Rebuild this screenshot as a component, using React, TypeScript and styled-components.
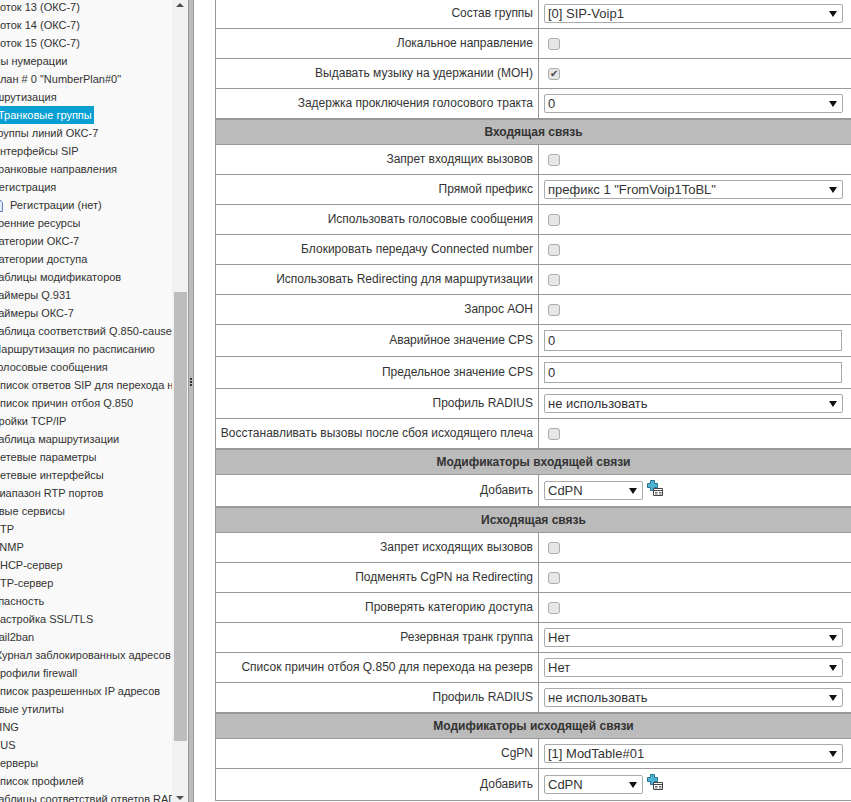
import React from "react";
import styled, { createGlobalStyle } from "styled-components";

const GlobalStyle = createGlobalStyle`
  html, body {
    margin: 0;
    padding: 0;
    height: 100%;
    overflow: hidden;
    background: #fff;
  }
  body {
    font-family: "Liberation Sans", Arial, sans-serif;
    font-size: 12px;
    color: #333;
  }
`;

type TreeItem = { text: string; level: number; selected?: boolean; doc?: boolean };

const tree: TreeItem[] = [
  { text: "Поток 13 (ОКС-7)", level: 1 },
  { text: "Поток 14 (ОКС-7)", level: 1 },
  { text: "Поток 15 (ОКС-7)", level: 1 },
  { text: "Планы нумерации", level: 0 },
  { text: 'План # 0 "NumberPlan#0"', level: 1 },
  { text: "Маршрутизация", level: 0 },
  { text: "Транковые группы", level: 1, selected: true },
  { text: "Группы линий ОКС-7", level: 1 },
  { text: "Интерфейсы SIP", level: 1 },
  { text: "Транковые направления", level: 1 },
  { text: "Регистрация", level: 1 },
  { text: "Регистрации (нет)", level: 2, doc: true },
  { text: "Внутренние ресурсы", level: 0 },
  { text: "Категории ОКС-7", level: 1 },
  { text: "Категории доступа", level: 1 },
  { text: "Таблицы модификаторов", level: 1 },
  { text: "Таймеры Q.931", level: 1 },
  { text: "Таймеры ОКС-7", level: 1 },
  { text: "Таблица соответствий Q.850-cause", level: 1 },
  { text: "Маршрутизация по расписанию", level: 1 },
  { text: "Голосовые сообщения", level: 1 },
  { text: "Список ответов SIP для перехода на резерв", level: 1 },
  { text: "Список причин отбоя Q.850", level: 1 },
  { text: "Настройки TCP/IP", level: 0 },
  { text: "Таблица маршрутизации", level: 1 },
  { text: "Сетевые параметры", level: 1 },
  { text: "Сетевые интерфейсы", level: 1 },
  { text: "Диапазон RTP портов", level: 1 },
  { text: "Сетевые сервисы", level: 0 },
  { text: "NTP", level: 1 },
  { text: "SNMP", level: 1 },
  { text: "DHCP-сервер", level: 1 },
  { text: "NTP-сервер", level: 1 },
  { text: "Безопасность", level: 0 },
  { text: "Настройка SSL/TLS", level: 1 },
  { text: "Fail2ban", level: 1 },
  { text: "Журнал заблокированных адресов", level: 1 },
  { text: "Профили firewall", level: 1 },
  { text: "Список разрешенных IP адресов", level: 1 },
  { text: "Сетевые утилиты", level: 0 },
  { text: "PING", level: 1 },
  { text: "RADIUS", level: 0 },
  { text: "Серверы", level: 1 },
  { text: "Список профилей", level: 1 },
  { text: "Таблицы соответствий ответов RADIUS", level: 1 },
];

type FormRow =
  | { kind: "select"; label: string; value: string; tall?: boolean }
  | { kind: "check"; label: string; checked?: boolean }
  | { kind: "input"; label: string; value: string }
  | { kind: "add"; label: string; value: string }
  | { kind: "header"; label: string };

const rows: FormRow[] = [
  { kind: "select", label: "Состав группы", value: "[0] SIP-Voip1" },
  { kind: "check", label: "Локальное направление" },
  { kind: "check", label: "Выдавать музыку на удержании (MOH)", checked: true },
  { kind: "select", label: "Задержка проключения голосового тракта", value: "0" },
  { kind: "header", label: "Входящая связь" },
  { kind: "check", label: "Запрет входящих вызовов" },
  { kind: "select", label: "Прямой префикс", value: 'префикс 1 "FromVoip1ToBL"' },
  { kind: "check", label: "Использовать голосовые сообщения" },
  { kind: "check", label: "Блокировать передачу Connected number" },
  { kind: "check", label: "Использовать Redirecting для маршрутизации" },
  { kind: "check", label: "Запрос АОН" },
  { kind: "input", label: "Аварийное значение CPS", value: "0" },
  { kind: "input", label: "Предельное значение CPS", value: "0" },
  { kind: "select", label: "Профиль RADIUS", value: "не использовать" },
  { kind: "check", label: "Восстанавливать вызовы после сбоя исходящего плеча" },
  { kind: "header", label: "Модификаторы входящей связи" },
  { kind: "add", label: "Добавить", value: "CdPN" },
  { kind: "header", label: "Исходящая связь" },
  { kind: "check", label: "Запрет исходящих вызовов" },
  { kind: "check", label: "Подменять CgPN на Redirecting" },
  { kind: "check", label: "Проверять категорию доступа" },
  { kind: "select", label: "Резервная транк группа", value: "Нет" },
  { kind: "select", label: "Список причин отбоя Q.850 для перехода на резерв", value: "Нет" },
  { kind: "select", label: "Профиль RADIUS", value: "не использовать" },
  { kind: "header", label: "Модификаторы исходящей связи" },
  { kind: "select", label: "CgPN", value: "[1] ModTable#01" },
  { kind: "add", label: "Добавить", value: "CdPN" },
];

const DocIcon = () => (
  <svg width="16" height="16" viewBox="0 0 16 16">
    <path d="M2.5 2.5h8l3 3v9h-11z" fill="#dfe9f8" stroke="#5b80c0" />
    <path d="M5 1.5h4v2H5z" fill="#9fb6dc" stroke="#5b80c0" strokeWidth="0.6" />
  </svg>
);

const AddIcon = () => (
  <svg width="18" height="18" viewBox="0 0 18 18">
    <path d="M3.5.5h4v3h3v4h-3v3h-4v-3h-3v-4h3z" fill="#4db3d4" stroke="#2a7492" />
    <path d="M6.5 8.5h9v7h-9z" fill="#fff" stroke="#444" />
    <path d="M6.5 10.5h9" stroke="#444" />
    <path d="M8 12.5h2.5M8 14h2.5M12 12.5h2.5M12 14h2.5" stroke="#666" />
  </svg>
);

const App = (): JSX.Element => {
  return (
    <>
      <GlobalStyle />
      <Page>
        <TreePanel>
          <TreeList>
            {tree.map((item) => (
              <TreeRow key={item.text}>
                {item.doc ? (
                  <DocSlot>
                    <DocIcon />
                  </DocSlot>
                ) : null}
                <TreeLabel $level={item.level} $selected={item.selected}>
                  {item.text}
                </TreeLabel>
              </TreeRow>
            ))}
          </TreeList>
        </TreePanel>
        <ScrollBar>
          <ArrowUp />
          <Thumb />
          <ArrowDown />
        </ScrollBar>
        <Splitter>
          <SplitterDot />
          <SplitterDot />
          <SplitterDot />
        </Splitter>
        <Main>
          <FormTable>
            {rows.map((row, i) =>
              row.kind === "header" ? (
                <SectionHeader key={i}>{row.label}</SectionHeader>
              ) : (
                <Row key={i} $tall={row.kind === "input" || row.kind === "add"}>
                  <LabelCell>{row.label}</LabelCell>
                  <ValueCell>
                    {row.kind === "select" ? (
                      <SelectWrap>
                        <Select defaultValue={row.value}>
                          <option>{row.value}</option>
                        </Select>
                      </SelectWrap>
                    ) : null}
                    {row.kind === "check" ? (
                      <Check type="checkbox" defaultChecked={row.checked} />
                    ) : null}
                    {row.kind === "input" ? <TextInput defaultValue={row.value} /> : null}
                    {row.kind === "add" ? (
                      <>
                        <SelectWrap $small>
                          <Select defaultValue={row.value}>
                            <option>{row.value}</option>
                          </Select>
                        </SelectWrap>
                        <AddButton>
                          <AddIcon />
                        </AddButton>
                      </>
                    ) : null}
                  </ValueCell>
                </Row>
              ),
            )}
          </FormTable>
        </Main>
      </Page>
    </>
  );
};

export default App;

const Page = styled.div`
  display: flex;
  width: 851px;
  height: 802px;
  overflow: hidden;
`;

const TreePanel = styled.div`
  width: 172px;
  flex-shrink: 0;
  overflow: hidden;
  background: #f9f9f9;
`;

const TreeList = styled.ul`
  list-style: none;
  margin: -2px 0 0;
  padding: 0;
`;

const TreeRow = styled.li`
  display: flex;
  align-items: center;
  height: 18px;
  white-space: nowrap;
  font-size: 11px;
`;

const DocSlot = styled.span`
  display: flex;
  flex-shrink: 0;
  margin-left: -11px;
`;

const TreeLabel = styled.span<{ $level: number; $selected?: boolean }>`
  line-height: 18px;
  margin-left: ${(p) =>
    p.$selected ? "-2px" : p.$level === 0 ? "-26px" : p.$level === 1 ? "-8px" : "5px"};
  padding-right: ${(p) => (p.$selected ? "2px" : "0")};
  background: ${(p) => (p.$selected ? "#0a9fd3" : "transparent")};
  color: ${(p) => (p.$selected ? "#fff" : "#333")};
`;

const ScrollBar = styled.div`
  display: flex;
  flex-direction: column;
  align-items: center;
  width: 16px;
  flex-shrink: 0;
  background: #f1f1f1;
`;

const ArrowUp = styled.div`
  margin-top: 3px;
  width: 0;
  height: 0;
  border-left: 4px solid transparent;
  border-right: 4px solid transparent;
  border-bottom: 4px solid #505050;
`;

const ArrowDown = styled.div`
  margin-top: 55px;
  width: 0;
  height: 0;
  border-left: 4px solid transparent;
  border-right: 4px solid transparent;
  border-top: 4px solid #505050;
`;

const Thumb = styled.div`
  margin-top: 285px;
  width: 13px;
  height: 449px;
  background: #bdbdbd;
`;

const Splitter = styled.div`
  display: flex;
  flex-direction: column;
  align-items: center;
  gap: 1px;
  box-sizing: border-box;
  width: 6px;
  flex-shrink: 0;
  padding-top: 378px;
  background: #bbb;
  border-left: 1px solid #999;
  border-right: 1px solid #999;
`;

const SplitterDot = styled.span`
  width: 2px;
  height: 2px;
  background: #333;
`;

const Main = styled.div`
  flex: 1;
  padding-left: 21px;
  overflow: hidden;
`;

const FormTable = styled.div`
  margin-top: -1px;
  width: 636px;
  border-left: 1px solid #999;
  box-sizing: border-box;
`;

const Row = styled.div<{ $tall?: boolean }>`
  display: grid;
  grid-template-columns: 323px 1fr;
  box-sizing: border-box;
  height: ${(p) => (p.$tall ? "32px" : "30px")};
  border-bottom: 1px solid #999;
`;

const LabelCell = styled.div`
  display: flex;
  align-items: center;
  justify-content: flex-end;
  padding: 0 5px 2px 0;
  white-space: nowrap;
  border-right: 1px solid #999;
`;

const ValueCell = styled.div`
  display: flex;
  align-items: center;
  padding-left: 5px;
`;

const SectionHeader = styled.div`
  display: flex;
  align-items: center;
  justify-content: center;
  box-sizing: border-box;
  height: 26px;
  font-weight: bold;
  background: #bbb;
  border-top: 1px solid #999;
  border-bottom: 1px solid #999;
`;

const SelectWrap = styled.div<{ $small?: boolean }>`
  position: relative;
  width: ${(p) => (p.$small ? "99px" : "299px")};
  height: 19px;

  &::after {
    content: "";
    position: absolute;
    right: 6px;
    top: 7px;
    width: 0;
    height: 0;
    border-left: 4px solid transparent;
    border-right: 4px solid transparent;
    border-top: 6px solid #111;
    pointer-events: none;
  }
`;

const Select = styled.select`
  appearance: none;
  display: block;
  box-sizing: border-box;
  width: 100%;
  height: 100%;
  margin: 0;
  padding: 0 0 1px 3px;
  font-family: "Liberation Sans", Arial, sans-serif;
  font-size: 13px;
  color: #333;
  background: #fff;
  border: 1px solid #aaa;
  border-radius: 2px;
`;

const Check = styled.input`
  appearance: none;
  position: relative;
  box-sizing: border-box;
  width: 12px;
  height: 12px;
  margin: 0 0 0 4px;
  background: #e6e6e6;
  border: 1px solid #adadad;
  border-radius: 3px;

  &:checked::after {
    content: "✔";
    position: absolute;
    left: 1px;
    top: -1px;
    font-size: 10px;
    line-height: 12px;
    color: #444;
  }
`;

const TextInput = styled.input`
  box-sizing: border-box;
  width: 298px;
  height: 21px;
  margin: 0;
  padding: 0 3px;
  font-family: "Liberation Sans", Arial, sans-serif;
  font-size: 13px;
  color: #333;
  border: 1px solid #aaa;
`;

const AddButton = styled.span`
  display: flex;
  align-self: flex-start;
  margin: 5px 0 0 4px;
`;
